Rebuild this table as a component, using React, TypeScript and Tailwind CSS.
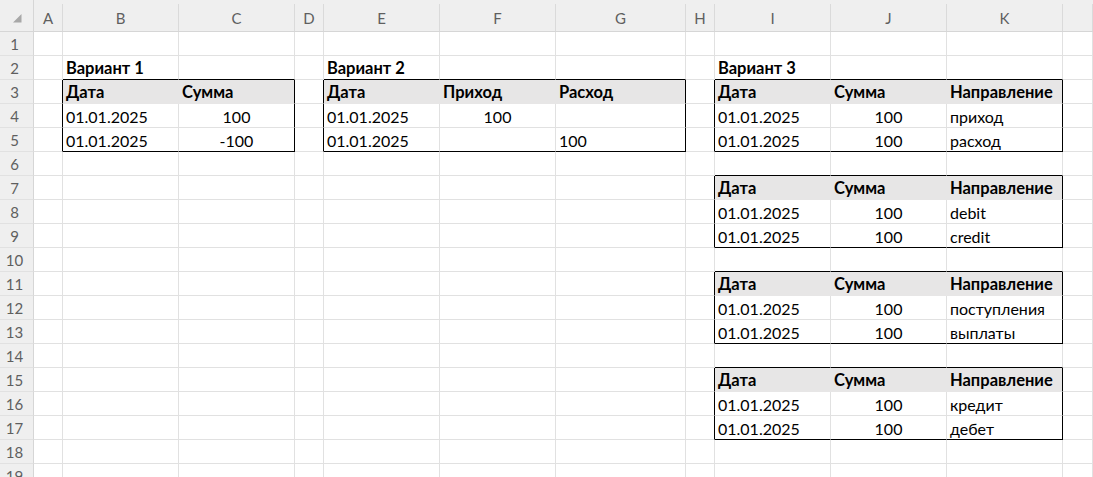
import clsx from "clsx";

type Cell = { text: string; bold?: boolean; center?: boolean };
type Table = { c1: number; c2: number; r1: number; r2: number };

// column letters, index 0 = A
const LETTERS = ["A", "B", "C", "D", "E", "F", "G", "H", "I", "J", "K", ""];
const ROW_COUNT = 19;

const tables: Table[] = [
  { c1: 1, c2: 2, r1: 3, r2: 5 },
  { c1: 4, c2: 6, r1: 3, r2: 5 },
  { c1: 8, c2: 10, r1: 3, r2: 5 },
  { c1: 8, c2: 10, r1: 7, r2: 9 },
  { c1: 8, c2: 10, r1: 11, r2: 13 },
  { c1: 8, c2: 10, r1: 15, r2: 17 },
];

const cells: Record<string, Cell> = {};
const put = (r: number, c: number, text: string, extra: Partial<Cell> = {}) => {
  cells[`${r}:${c}`] = { text, ...extra };
};

// Вариант 1
put(2, 1, "Вариант 1", { bold: true });
put(3, 1, "Дата", { bold: true });
put(3, 2, "Сумма", { bold: true });
put(4, 1, "01.01.2025");
put(4, 2, "100", { center: true });
put(5, 1, "01.01.2025");
put(5, 2, "-100", { center: true });

// Вариант 2
put(2, 4, "Вариант 2", { bold: true });
put(3, 4, "Дата", { bold: true });
put(3, 5, "Приход", { bold: true });
put(3, 6, "Расход", { bold: true });
put(4, 4, "01.01.2025");
put(4, 5, "100", { center: true });
put(5, 4, "01.01.2025");
put(5, 6, "100");

// Вариант 3
put(2, 8, "Вариант 3", { bold: true });
const directions: [number, string, string][] = [
  [3, "приход", "расход"],
  [7, "debit", "credit"],
  [11, "поступления", "выплаты"],
  [15, "кредит", "дебет"],
];
directions.forEach(([r, a, b]) => {
  put(r, 8, "Дата", { bold: true });
  put(r, 9, "Сумма", { bold: true });
  put(r, 10, "Направление", { bold: true });
  put(r + 1, 8, "01.01.2025");
  put(r + 1, 9, "100", { center: true });
  put(r + 1, 10, a);
  put(r + 2, 8, "01.01.2025");
  put(r + 2, 9, "100", { center: true });
  put(r + 2, 10, b);
});

const isHeader = (r: number, c: number) =>
  tables.some((t) => r === t.r1 && c >= t.c1 && c <= t.c2);

const blackRight = (r: number, c: number) =>
  tables.some((t) => r >= t.r1 && r <= t.r2 && (c === t.c2 || c === t.c1 - 1));

const blackBottom = (r: number, c: number) =>
  tables.some((t) => c >= t.c1 && c <= t.c2 && (r === t.r2 || r === t.r1 - 1));

function SheetCell({ r, c }: { r: number; c: number }) {
  const fill = isHeader(r, c);
  const cell = cells[`${r}:${c}`];
  return (
    <div
      className={clsx(
        "border-r border-b",
        fill ? "bg-[#e7e6e6]" : "bg-white",
        blackRight(r, c) ? "border-r-black" : fill ? "border-r-[#e7e6e6]" : "border-r-[#e1e1e1]",
        blackBottom(r, c) ? "border-b-black" : fill ? "border-b-[#e7e6e6]" : "border-b-[#e1e1e1]"
      )}
    >
      {cell && (
        <div
          className={clsx(
            "h-full pt-[2px] leading-[21px] whitespace-nowrap",
            cell.bold && "font-bold text-[16.5px]",
            cell.center ? "text-center" : "pl-[3px]"
          )}
        >
          {cell.text}
        </div>
      )}
    </div>
  );
}

export default function App() {
  const rows = Array.from({ length: ROW_COUNT }, (_, i) => i + 1);
  return (
    <div className="h-[477px] w-[1093px] overflow-hidden bg-white font-['Lato','Open_Sans',sans-serif] text-[16px] text-black">
      <div className="grid grid-cols-[34px_29px_116px_116px_29px_116px_116px_130px_29px_116px_116px_116px_1fr] grid-rows-[32px_repeat(19,24px)]">
        {/* corner */}
        <div className="flex items-center justify-center border-r border-b border-[#d6d6d6] bg-[#efefef] pt-[6px] pl-[2px]">
          <svg width="9" height="9" viewBox="0 0 9 9">
            <polygon points="8.5,0 8.5,8.5 0,8.5" fill="#a8a8a8" />
          </svg>
        </div>

        {/* column headers */}
        {LETTERS.map((l, i) => (
          <div key={`h${i}`} className="border-b border-[#d6d6d6] bg-[#efefef] pt-[4px]">
            <div className="h-full border-r border-[#dadada] pt-[1px] text-center text-[15px] leading-[26px] text-[#5f5f5f]">
              {l}
            </div>
          </div>
        ))}

        {rows.map((r) => [
          <div
            key={`r${r}`}
            className="border-r border-b border-r-[#d6d6d6] border-b-[#e1e1e1] bg-[#efefef] pt-[1px] pr-[4px] text-center text-[15px] leading-[22px] text-[#5f5f5f]"
          >
            {r}
          </div>,
          ...LETTERS.map((_, c) => <SheetCell key={`${r}-${c}`} r={r} c={c} />),
        ])}
      </div>
    </div>
  );
}
